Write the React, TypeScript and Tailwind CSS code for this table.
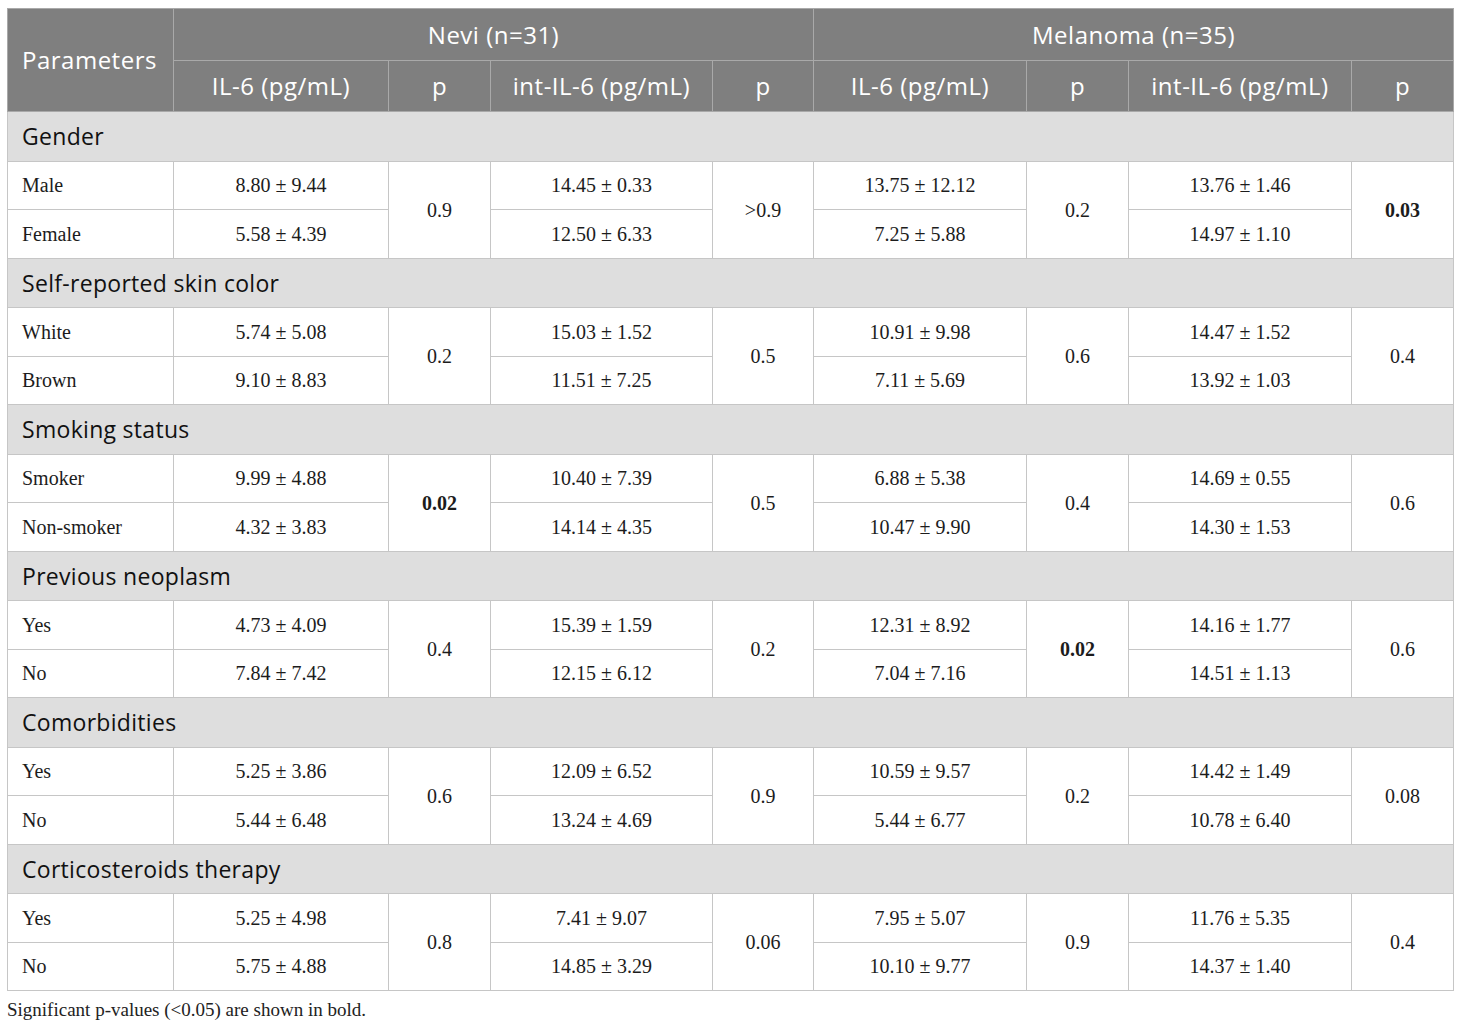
type Row = { label: string; vals: [string, string, string, string] };
type Group = {
  title: string;
  rows: [Row, Row];
  p: [string, string, string, string];
  bold?: number;
};

const groups: Group[] = [
  {
    title: 'Gender',
    rows: [
      { label: 'Male', vals: ['8.80 ± 9.44', '14.45 ± 0.33', '13.75 ± 12.12', '13.76 ± 1.46'] },
      { label: 'Female', vals: ['5.58 ± 4.39', '12.50 ± 6.33', '7.25 ± 5.88', '14.97 ± 1.10'] },
    ],
    p: ['0.9', '>0.9', '0.2', '0.03'],
    bold: 3,
  },
  {
    title: 'Self-reported skin color',
    rows: [
      { label: 'White', vals: ['5.74 ± 5.08', '15.03 ± 1.52', '10.91 ± 9.98', '14.47 ± 1.52'] },
      { label: 'Brown', vals: ['9.10 ± 8.83', '11.51 ± 7.25', '7.11 ± 5.69', '13.92 ± 1.03'] },
    ],
    p: ['0.2', '0.5', '0.6', '0.4'],
  },
  {
    title: 'Smoking status',
    rows: [
      { label: 'Smoker', vals: ['9.99 ± 4.88', '10.40 ± 7.39', '6.88 ± 5.38', '14.69 ± 0.55'] },
      { label: 'Non-smoker', vals: ['4.32 ± 3.83', '14.14 ± 4.35', '10.47 ± 9.90', '14.30 ± 1.53'] },
    ],
    p: ['0.02', '0.5', '0.4', '0.6'],
    bold: 0,
  },
  {
    title: 'Previous neoplasm',
    rows: [
      { label: 'Yes', vals: ['4.73 ± 4.09', '15.39 ± 1.59', '12.31 ± 8.92', '14.16 ± 1.77'] },
      { label: 'No', vals: ['7.84 ± 7.42', '12.15 ± 6.12', '7.04 ± 7.16', '14.51 ± 1.13'] },
    ],
    p: ['0.4', '0.2', '0.02', '0.6'],
    bold: 2,
  },
  {
    title: 'Comorbidities',
    rows: [
      { label: 'Yes', vals: ['5.25 ± 3.86', '12.09 ± 6.52', '10.59 ± 9.57', '14.42 ± 1.49'] },
      { label: 'No', vals: ['5.44 ± 6.48', '13.24 ± 4.69', '5.44 ± 6.77', '10.78 ± 6.40'] },
    ],
    p: ['0.6', '0.9', '0.2', '0.08'],
  },
  {
    title: 'Corticosteroids therapy',
    rows: [
      { label: 'Yes', vals: ['5.25 ± 4.98', '7.41 ± 9.07', '7.95 ± 5.07', '11.76 ± 5.35'] },
      { label: 'No', vals: ['5.75 ± 4.88', '14.85 ± 3.29', '10.10 ± 9.77', '14.37 ± 1.40'] },
    ],
    p: ['0.8', '0.06', '0.9', '0.4'],
  },
];

const sans = "font-['Open_Sans',sans-serif]";
const serif = "font-['Liberation_Serif',serif]";
const hd = 'border border-[#a9a9a9] font-normal text-white text-[24px] tracking-[0.5px] text-center';
const td = 'border border-[#c6c6c6] h-[48.5px] p-0 text-center align-middle';

export default function App() {
  return (
    <div className="bg-white w-[1460px] min-h-[1027px] pt-[8px] px-[7px]">
      <table className="table-fixed border-collapse w-[1446px] border border-[#c6c6c6]">
        <colgroup>
          <col className="w-[166px]" />
          <col className="w-[215px]" />
          <col className="w-[102px]" />
          <col className="w-[222px]" />
          <col className="w-[101px]" />
          <col className="w-[213px]" />
          <col className="w-[102px]" />
          <col className="w-[223px]" />
          <col className="w-[102px]" />
        </colgroup>
        <thead className={`bg-[#7f7f7f] ${sans}`}>
          <tr className="h-[52px]">
            <th rowSpan={2} className={`${hd} text-left pl-[14px]`}>Parameters</th>
            <th colSpan={4} className={hd}>Nevi (n=31)</th>
            <th colSpan={4} className={hd}>Melanoma (n=35)</th>
          </tr>
          <tr className="h-[51px]">
            <th className={hd}>IL-6 (pg/mL)</th>
            <th className={hd}>p</th>
            <th className={hd}>int-IL-6 (pg/mL)</th>
            <th className={hd}>p</th>
            <th className={hd}>IL-6 (pg/mL)</th>
            <th className={hd}>p</th>
            <th className={hd}>int-IL-6 (pg/mL)</th>
            <th className={hd}>p</th>
          </tr>
        </thead>
        <tbody className="text-[#1c1c1c]">
          {groups.map((g) => (
            <GroupRows key={g.title} g={g} />
          ))}
        </tbody>
      </table>
      <p className={`${serif} text-[19px] text-[#222] mt-[5px]`}>
        Significant p-values (&lt;0.05) are shown in bold.
      </p>
    </div>
  );
}

function GroupRows({ g }: { g: Group }) {
  return (
    <>
      <tr className="bg-[#dedede] h-[49.5px]">
        <td colSpan={9} className={`border border-[#c6c6c6] pl-[14px] text-[23px] tracking-[0.3px] text-[#111] ${sans}`}>
          {g.title}
        </td>
      </tr>
      {g.rows.map((r, i) => (
        <tr key={r.label} className={`${serif} text-[20px]`}>
          <td className={`${td} text-left pl-[14px]`}>{r.label}</td>
          {r.vals.map((v, j) => (
            <CellPair key={j} v={v} p={g.p[j]} first={i === 0} bold={g.bold === j} />
          ))}
        </tr>
      ))}
    </>
  );
}

function CellPair({ v, p, first, bold }: { v: string; p: string; first: boolean; bold: boolean }) {
  return (
    <>
      <td className={td}>{v}</td>
      {first && (
        <td rowSpan={2} className={`${td} ${bold ? 'font-bold' : ''}`}>
          {p}
        </td>
      )}
    </>
  );
}
